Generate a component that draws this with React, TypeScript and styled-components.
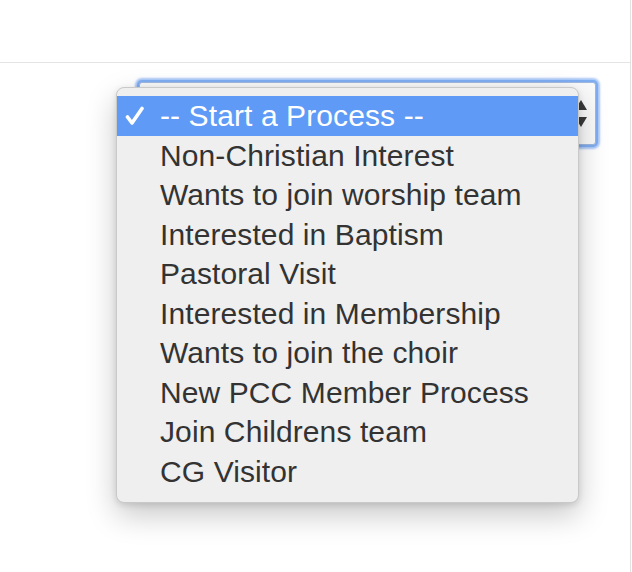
import React from "react";
import styled, { createGlobalStyle } from "styled-components";

const GlobalStyle = createGlobalStyle`
  html, body {
    margin: 0;
    padding: 0;
    background: #ffffff;
    font-family: "Liberation Sans", Arial, sans-serif;
  }
`;

const processes = [
  "Non-Christian Interest",
  "Wants to join worship team",
  "Interested in Baptism",
  "Pastoral Visit",
  "Interested in Membership",
  "Wants to join the choir",
  "New PCC Member Process",
  "Join Childrens team",
  "CG Visitor",
];

export default function App() {
  return (
    <>
      <GlobalStyle />
      <Page>
        <Main>
          <Header />
          <Body>
            <SelectWrap>
              <SelectBox>
                <Arrows viewBox="0 0 12 28" width="12" height="28">
                  <path d="M6 0 L12 10 L0 10 Z" fill="#3a3a3a" />
                  <path d="M0 17 L12 17 L6 27 Z" fill="#3a3a3a" />
                </Arrows>
              </SelectBox>
              <Menu>
                <Option selected>
                  <Check viewBox="0 0 20 20" width="20" height="20">
                    <path
                      d="M2.5 11 L7 17 L17 2.5"
                      fill="none"
                      stroke="#ffffff"
                      strokeWidth="3.6"
                      strokeLinecap="round"
                      strokeLinejoin="round"
                    />
                  </Check>
                  -- Start a Process --
                </Option>
                {processes.map((p) => (
                  <Option key={p}>{p}</Option>
                ))}
              </Menu>
            </SelectWrap>
          </Body>
        </Main>
      </Page>
    </>
  );
}

const Page = styled.div`
  display: flex;
  width: 632px;
  height: 572px;
  overflow: hidden;
`;

const Main = styled.div`
  width: 630px;
  height: 100%;
  border-right: 1px solid #e2e2e2;
  display: flex;
  flex-direction: column;
`;

const Header = styled.div`
  height: 62px;
  flex-shrink: 0;
  border-bottom: 1px solid #e4e4e4;
`;

const Body = styled.div`
  flex: 1;
  padding: 19px 0 0 139px;
`;

const SelectWrap = styled.div`
  position: relative;
  width: 457px;
`;

const SelectBox = styled.div`
  height: 63px;
  box-sizing: border-box;
  border: 1px solid #9fb8df;
  border-radius: 3px;
  background: #fafafa;
  box-shadow: 0 0 0 2px #7fadf2, 0 0 2px 4px rgba(100, 155, 240, 0.55);
  display: flex;
  align-items: center;
  justify-content: flex-end;
  padding-right: 8px;
`;

const Arrows = styled.svg`
  display: block;
`;

const Menu = styled.div`
  position: absolute;
  left: -23px;
  top: 5px;
  width: 463px;
  box-sizing: border-box;
  padding: 8px 0 10px;
  background: #efefef;
  border: 1px solid #c9c9c9;
  border-radius: 8px;
  box-shadow: 0 12px 30px rgba(0, 0, 0, 0.22), 0 2px 6px rgba(0, 0, 0, 0.12);
`;

const Option = styled.div<{ selected?: boolean }>`
  position: relative;
  height: ${(p) => (p.selected ? "40px" : "39.5px")};
  display: flex;
  align-items: center;
  padding-left: 43px;
  font-size: 30px;
  letter-spacing: 0.1px;
  color: ${(p) => (p.selected ? "#ffffff" : "#333333")};
  background: ${(p) => (p.selected ? "#5f9bf6" : "transparent")};
  white-space: nowrap;
`;

const Check = styled.svg`
  position: absolute;
  left: 8px;
  top: 10px;
`;
